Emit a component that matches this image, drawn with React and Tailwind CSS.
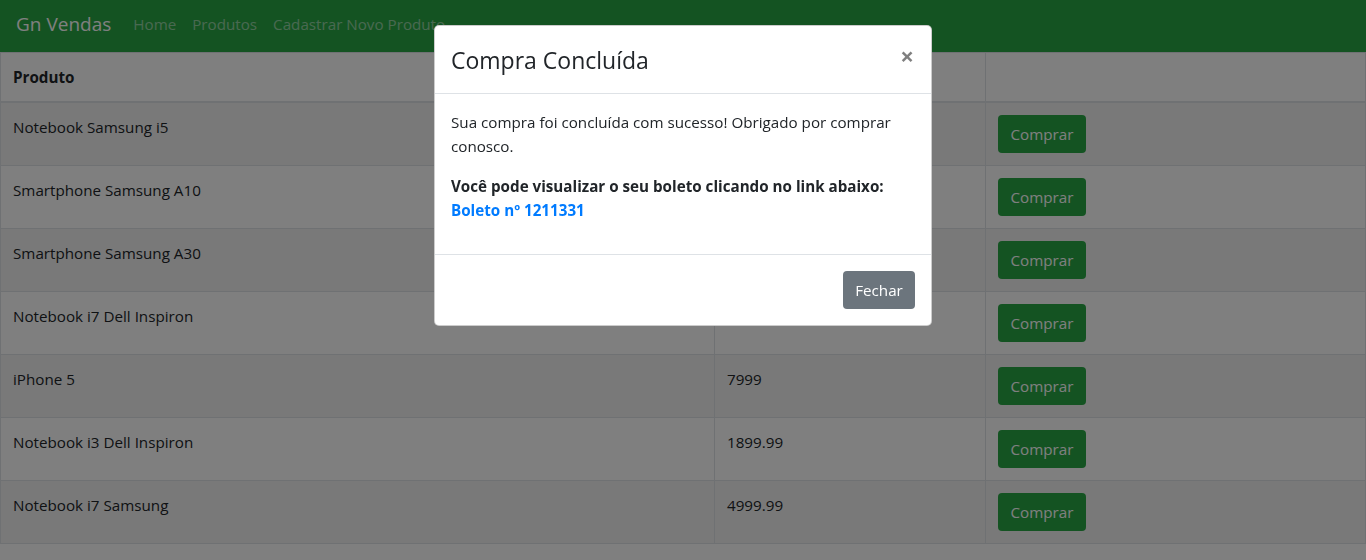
import { useState } from "react";

const produtos = [
  { id: 1, nome: "Notebook Samsung i5", preco: "" },
  { id: 2, nome: "Smartphone Samsung A10", preco: "" },
  { id: 3, nome: "Smartphone Samsung A30", preco: "" },
  { id: 4, nome: "Notebook i7 Dell Inspiron", preco: "" },
  { id: 5, nome: "iPhone 5", preco: "7999" },
  { id: 6, nome: "Notebook i3 Dell Inspiron", preco: "1899.99" },
  { id: 7, nome: "Notebook i7 Samsung", preco: "4999.99" },
];

export default function App() {
  const [aberto, setAberto] = useState(true);

  return (
    <div className="min-h-[560px] bg-white text-[#212529] text-[15.2px] leading-6 font-['Segoe_UI','Open_Sans',sans-serif]">
      <nav className="h-[52px] bg-[#28a745] flex items-center px-4 pb-[4px]">
        <a className="text-white text-[19px] mr-[22px]">Gn Vendas</a>
        <a className="text-white/50 pr-4">Home</a>
        <a className="text-white/50 pr-4">Produtos</a>
        <a className="text-white/50">Cadastrar Novo Produto</a>
      </nav>

      <table className="w-full table-fixed border-collapse border border-[#dee2e6]">
        <colgroup>
          <col className="w-[714px]" />
          <col className="w-[271px]" />
          <col />
        </colgroup>
        <thead>
          <tr>
            <th className="text-left font-bold p-3 border border-[#dee2e6] border-b-2">Produto</th>
            <th className="p-3 border border-[#dee2e6] border-b-2"></th>
            <th className="p-3 border border-[#dee2e6] border-b-2"></th>
          </tr>
        </thead>
        <tbody>
          {produtos.map((p, i) => (
            <tr key={p.id} className={i % 2 === 0 ? "bg-black/5" : ""}>
              <td className="p-3 align-top border border-[#dee2e6]">{p.nome}</td>
              <td className="p-3 align-top border border-[#dee2e6]">{p.preco}</td>
              <td className="p-3 align-top border border-[#dee2e6]">
                <button
                  onClick={() => setAberto(true)}
                  className="bg-[#28a745] text-white px-3 h-[38px] w-[88px] rounded"
                >
                  Comprar
                </button>
              </td>
            </tr>
          ))}
        </tbody>
      </table>

      {aberto && (
        <>
          <div className="fixed inset-0 bg-black/50"></div>
          <div className="fixed inset-0 flex justify-center">
            <div className="mt-[25px] w-[498px] self-start bg-white border border-black/20 rounded-[5px]">
              <div className="flex items-start justify-between px-4 pt-4 pb-[15px] border-b border-[#dee2e6]">
                <h4 className="text-[23px] leading-9 font-medium">Compra Concluída</h4>
                <button
                  onClick={() => setAberto(false)}
                  className="text-[24px] leading-6 font-bold text-black/50 mt-[2px] mr-[1px]"
                >
                  ×
                </button>
              </div>
              <div className="p-4">
                <p className="mb-4">Sua compra foi concluída com sucesso! Obrigado por comprar conosco.</p>
                <p className="mb-4 font-bold">
                  Você pode visualizar o seu boleto clicando no link abaixo:
                  <br />
                  <a className="text-[#007bff]">Boleto nº 1211331</a>
                </p>
              </div>
              <div className="flex justify-end p-4 border-t border-[#dee2e6]">
                <button
                  onClick={() => setAberto(false)}
                  className="bg-[#6c757d] text-white h-[38px] w-[72px] rounded"
                >
                  Fechar
                </button>
              </div>
            </div>
          </div>
        </>
      )}
    </div>
  );
}
